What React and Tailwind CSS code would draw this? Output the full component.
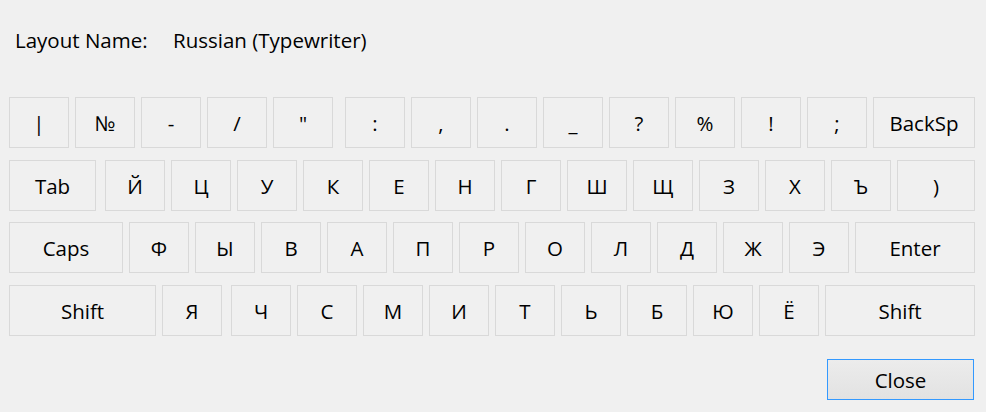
import React from "react";

const rows = [
    {
        top: "mt-[0px]",
        keys: [
            { label: "|" }, { label: "№" }, { label: "-" }, { label: "/" }, { label: '"' },
            { label: ":", cls: "w-[60px] ml-[6px]" }, { label: "," }, { label: "." }, { label: "_" }, { label: "?" },
            { label: "%" }, { label: "!" }, { label: ";" },
            { label: "BackSp", cls: "w-[102px]" },
        ],
    },
    {
        top: "mt-[12px]",
        keys: [
            { label: "Tab", cls: "w-[87px]" },
            { label: "Й", cls: "w-[60px] ml-[3px]" }, { label: "Ц" }, { label: "У" }, { label: "К" },
            { label: "Е" }, { label: "Н" }, { label: "Г" }, { label: "Ш" }, { label: "Щ" },
            { label: "З" }, { label: "Х" }, { label: "Ъ" },
            { label: ")", cls: "w-[78px]" },
        ],
    },
    {
        top: "mt-[11px]",
        keys: [
            { label: "Caps", cls: "w-[114px]" },
            { label: "Ф" }, { label: "Ы" }, { label: "В" }, { label: "А" }, { label: "П" },
            { label: "Р" }, { label: "О" }, { label: "Л" }, { label: "Д" }, { label: "Ж" },
            { label: "Э" },
            { label: "Enter", cls: "w-[120px]" },
        ],
    },
    {
        top: "mt-[12px]",
        keys: [
            { label: "Shift", cls: "w-[147px]" },
            { label: "Я" },
            { label: "Ч", cls: "w-[60px] ml-[3px]" }, { label: "С" }, { label: "М" }, { label: "И" },
            { label: "Т" }, { label: "Ь" }, { label: "Б" }, { label: "Ю" }, { label: "Ё" },
            { label: "Shift", cls: "w-[150px]" },
        ],
    },
];

const Key = ({ label, cls }) => (
    <div
        className={`${cls || "w-[60px]"} h-[51px] shrink-0 flex items-center justify-center border border-[#d9d9d9] bg-[#f0f0f0] text-black`}
    >
        {label}
    </div>
);

export default function App() {
    return (
        <div
            className="w-[986px] h-[412px] bg-[#f0f0f0] text-[20.5px] leading-[26px] text-black overflow-hidden"
            style={{ fontFamily: '"Open Sans", "Noto Sans", sans-serif' }}
        >
            {/* header */}
            <div className="flex items-center h-[26px] mt-[27px] pl-[15px]">
                <span className="w-[158px]">Layout Name:</span>
                <span>Russian (Typewriter)</span>
            </div>

            {/* keyboard */}
            <div className="flex flex-col pl-[9px] mt-[44px]">
                {rows.map((row, i) => (
                    <div key={i} className={`flex gap-[6px] ${row.top}`}>
                        {row.keys.map((k, j) => (
                            <Key key={j} label={k.label} cls={k.cls} />
                        ))}
                    </div>
                ))}
            </div>

            <div className="flex justify-end pr-[12px] mt-[23px]">
                <div
                    role="button"
                    className="w-[147px] h-[41px] border border-[#3399ff] bg-[#e8e8e8] bg-gradient-to-b from-[#ececec] to-[#e2e2e2] flex items-center justify-center cursor-default"
                >
                    Close
                </div>
            </div>
        </div>
    );
}
